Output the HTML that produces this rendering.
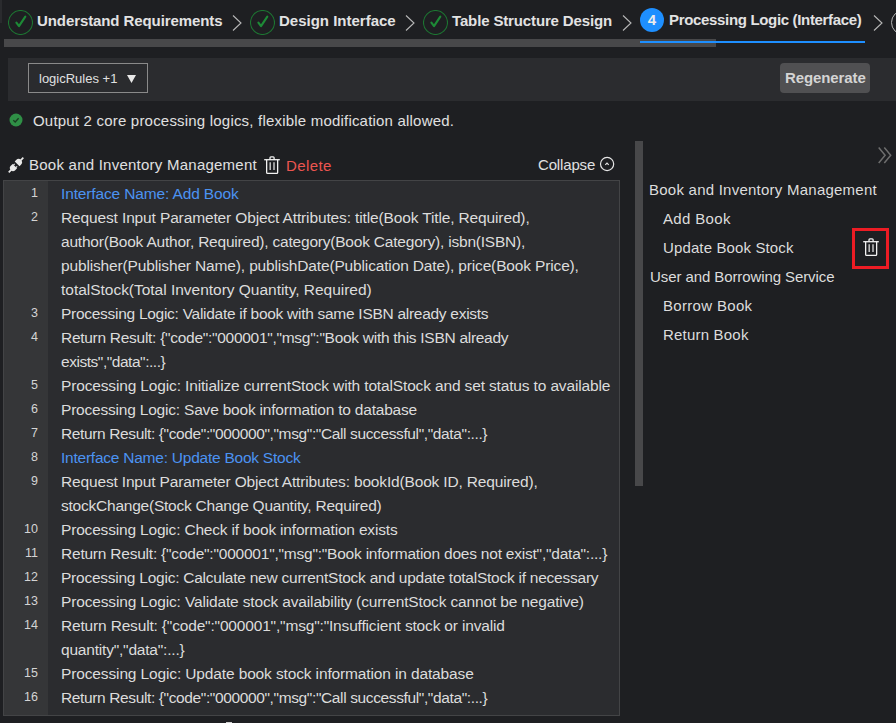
<!DOCTYPE html>
<html><head><meta charset="utf-8">
<style>
*{margin:0;padding:0;box-sizing:border-box}
html,body{width:896px;height:723px;overflow:hidden;background:#1e1f22;font-family:"Liberation Sans",sans-serif;color:#dcdcdc}
.abs{position:absolute}
.tab{position:absolute;top:12px;font-size:15px;font-weight:bold;color:#e2e2e2;white-space:nowrap;line-height:17px}
.ck{position:absolute;top:10px;width:25px;height:25px}
.chev{position:absolute;top:15px;width:10px;height:16px}
.code{position:absolute;left:3px;top:180px;width:617px;height:536px;border:1px solid #434446;background:#2b2c2f}
.gutter{position:absolute;left:0;top:0;width:44px;height:100%;background:#353638}
.ln{position:absolute;left:0;width:34px;text-align:right;font-size:12.5px;color:#d4d4d4;line-height:24px}
.row{position:absolute;left:57px;font-size:15.5px;line-height:24px;white-space:nowrap;color:#dcdcdc}
.blue{color:#4b93f2}
.tree{position:absolute;font-size:15px;white-space:nowrap;color:#dcdcdc;line-height:17px}
</style></head>
<body>
<!-- left top strip -->
<div class="abs" style="left:0;top:0;width:2px;height:23px;background:#2a2b2e"></div>

<!-- step tabs -->
<svg class="ck" style="left:8px" viewBox="0 0 25 25"><circle cx="12.5" cy="12.5" r="12" fill="none" stroke="#1d7532" stroke-width="1.1"/><path d="M8.4 12.6 L11 16.2 L17.3 6.6" fill="none" stroke="#1d8a36" stroke-width="2.1" stroke-linecap="round" stroke-linejoin="round"/></svg>
<div class="tab" style="left:37px;letter-spacing:-0.09px">Understand Requirements</div>
<svg class="chev" style="left:232px" viewBox="0 0 10 16"><path d="M1 0.5 L9 8 L1 15.5" fill="none" stroke="#b8b8b8" stroke-width="1.1"/></svg>

<svg class="ck" style="left:250px" viewBox="0 0 25 25"><circle cx="12.5" cy="12.5" r="12" fill="none" stroke="#1d7532" stroke-width="1.1"/><path d="M8.4 12.6 L11 16.2 L17.3 6.6" fill="none" stroke="#1d8a36" stroke-width="2.1" stroke-linecap="round" stroke-linejoin="round"/></svg>
<div class="tab" style="left:279px">Design Interface</div>
<svg class="chev" style="left:405px" viewBox="0 0 10 16"><path d="M1 0.5 L9 8 L1 15.5" fill="none" stroke="#b8b8b8" stroke-width="1.1"/></svg>

<svg class="ck" style="left:423px" viewBox="0 0 25 25"><circle cx="12.5" cy="12.5" r="12" fill="none" stroke="#1d7532" stroke-width="1.1"/><path d="M8.4 12.6 L11 16.2 L17.3 6.6" fill="none" stroke="#1d8a36" stroke-width="2.1" stroke-linecap="round" stroke-linejoin="round"/></svg>
<div class="tab" style="left:452px;letter-spacing:-0.14px">Table Structure Design</div>
<svg class="chev" style="left:622px" viewBox="0 0 10 16"><path d="M1 0.5 L9 8 L1 15.5" fill="none" stroke="#b8b8b8" stroke-width="1.1"/></svg>

<div class="abs" style="left:640px;top:8px;width:24px;height:24px;border-radius:50%;background:#1e8fff;color:#ececec;font-weight:bold;font-size:15px;text-align:center;line-height:24px">4</div>
<div class="tab" style="left:669px;top:11px;letter-spacing:-0.33px">Processing Logic (Interface)</div>
<svg class="chev" style="left:873px" viewBox="0 0 10 16"><path d="M1 0.5 L9 8 L1 15.5" fill="none" stroke="#b8b8b8" stroke-width="1.1"/></svg>
<div class="abs" style="left:890.5px;top:10px;width:25px;height:25px;border-radius:50%;border:1.2px solid #b4b4b4"></div>

<!-- horizontal scroll bar + underline -->
<div class="abs" style="left:4px;top:39px;width:712px;height:8px;background:#48484a"></div>
<div class="abs" style="left:640px;top:41px;width:225px;height:2px;background:#1e8fff"></div>

<!-- toolbar -->
<div class="abs" style="left:8px;top:58px;width:888px;height:43px;background:#2b2c2f"></div>
<div class="abs" style="left:28px;top:63px;width:120px;height:30px;border:1px solid #8a8a8a;background:#2a2b2e"></div>
<div class="abs" style="left:39px;top:71px;font-size:13px;line-height:15px;color:#e0e0e0;white-space:nowrap">logicRules +1</div>
<svg class="abs" style="left:127px;top:75px" width="9" height="8" viewBox="0 0 9 8"><path d="M0 0 H9 L4.5 8 Z" fill="#e8e8e8"/></svg>
<div class="abs" style="left:780px;top:63px;width:90px;height:30px;border-radius:4px;background:#505052"></div>
<div class="abs" style="left:785px;top:69px;font-size:15px;font-weight:bold;line-height:17px;color:#d4d4d4;letter-spacing:-0.1px">Regenerate</div>

<!-- status -->
<svg class="abs" style="left:9px;top:113px" width="14" height="14" viewBox="0 0 14 14"><circle cx="7" cy="7" r="6.5" fill="#2f8f46"/><path d="M4.3 7.2 L6.2 9 L9.6 5.2" fill="none" stroke="#1b3a22" stroke-width="1.3"/></svg>
<div class="abs" style="left:33px;top:112px;font-size:15px;line-height:17px;color:#e0e0e0;white-space:nowrap;letter-spacing:0.2px">Output 2 core processing logics, flexible modification allowed.</div>

<!-- section header -->
<svg class="abs" style="left:4px;top:153px" width="24" height="24" viewBox="0 0 24 24"><g transform="translate(12,12) rotate(-45)" fill="#e8e8e8" stroke="none"><rect x="-10.3" y="-0.85" width="4.5" height="1.7"/><path d="M-1.6 -3.1 H-4.2 A3.1 3.1 0 0 0 -4.2 3.1 H-1.6 Z"/><rect x="-2" y="-2.3" width="1.9" height="1.15"/><rect x="-2" y="1.15" width="1.9" height="1.15"/><path d="M1.6 -3.4 H3.6 A3.4 3.4 0 0 1 3.6 3.4 H1.6 Z"/><rect x="5.5" y="-0.85" width="4.9" height="1.7"/></g></svg>
<div class="abs" style="left:29px;top:156px;font-size:15px;line-height:17px;color:#e0e0e0;white-space:nowrap;letter-spacing:0.24px">Book and Inventory Management</div>
<svg class="abs" style="left:260px;top:153px" width="24" height="24" viewBox="0 0 24 24"><g fill="none" stroke="#f2f2f2" stroke-width="1.3"><path d="M10 6.6 V4.8 Q10 3.85 10.95 3.85 H13.15 Q14.1 3.85 14.1 4.8 V6.6"/><path d="M4.2 6.7 H19.8"/><path d="M6.65 6.7 V19.4 Q6.65 20.35 7.6 20.35 H16.7 Q17.65 20.35 17.65 19.4 V6.7"/><path d="M10.2 9.2 V16.9 M14 9.2 V16.9" stroke="#c4c4c4" stroke-width="1.5"/></g></svg>
<div class="abs" style="left:286px;top:157px;font-size:15px;line-height:17px;color:#ec5550;white-space:nowrap;letter-spacing:0.4px">Delete</div>
<div class="abs" style="left:538px;top:156px;font-size:15px;line-height:17px;color:#e0e0e0;white-space:nowrap;letter-spacing:-0.15px">Collapse</div>
<svg class="abs" style="left:595px;top:152px" width="24" height="24" viewBox="0 0 24 24"><circle cx="12.1" cy="12" r="6.6" fill="none" stroke="#e6e6e6" stroke-width="1.2"/><path d="M10.3 12.9 L12 11.2 L13.7 12.9" fill="none" stroke="#e6e6e6" stroke-width="1.2"/></svg>

<!-- code panel -->
<div class="code">
  <div class="gutter"></div>
  <div class="ln" style="top:0px">1</div>
<div class="ln" style="top:24px">2</div>
<div class="ln" style="top:120px">3</div>
<div class="ln" style="top:144px">4</div>
<div class="ln" style="top:192px">5</div>
<div class="ln" style="top:216px">6</div>
<div class="ln" style="top:240px">7</div>
<div class="ln" style="top:264px">8</div>
<div class="ln" style="top:288px">9</div>
<div class="ln" style="top:336px">10</div>
<div class="ln" style="top:360px">11</div>
<div class="ln" style="top:384px">12</div>
<div class="ln" style="top:408px">13</div>
<div class="ln" style="top:432px">14</div>
<div class="ln" style="top:480px">15</div>
<div class="ln" style="top:504px">16</div>
<div class="row blue" style="top:1px;letter-spacing:-0.139px">Interface Name: Add Book</div>
<div class="row " style="top:25px;letter-spacing:-0.135px">Request Input Parameter Object Attributes: title(Book Title, Required),</div>
<div class="row " style="top:49px;letter-spacing:-0.209px">author(Book Author, Required), category(Book Category), isbn(ISBN),</div>
<div class="row " style="top:73px;letter-spacing:-0.147px">publisher(Publisher Name), publishDate(Publication Date), price(Book Price),</div>
<div class="row " style="top:97px;letter-spacing:-0.02px">totalStock(Total Inventory Quantity, Required)</div>
<div class="row " style="top:121px;letter-spacing:-0.278px">Processing Logic: Validate if book with same ISBN already exists</div>
<div class="row " style="top:145px;letter-spacing:-0.282px">Return Result: {"code":"000001","msg":"Book with this ISBN already</div>
<div class="row " style="top:169px;letter-spacing:-0.462px">exists","data":...}</div>
<div class="row " style="top:193px;letter-spacing:-0.147px">Processing Logic: Initialize currentStock with totalStock and set status to available</div>
<div class="row " style="top:217px;letter-spacing:-0.2px">Processing Logic: Save book information to database</div>
<div class="row " style="top:241px;letter-spacing:-0.376px">Return Result: {"code":"000000","msg":"Call successful","data":...}</div>
<div class="row blue" style="top:265px;letter-spacing:-0.237px">Interface Name: Update Book Stock</div>
<div class="row " style="top:289px;letter-spacing:-0.16px">Request Input Parameter Object Attributes: bookId(Book ID, Required),</div>
<div class="row " style="top:313px;letter-spacing:-0.228px">stockChange(Stock Change Quantity, Required)</div>
<div class="row " style="top:337px;letter-spacing:-0.18px">Processing Logic: Check if book information exists</div>
<div class="row " style="top:361px;letter-spacing:-0.218px">Return Result: {"code":"000001","msg":"Book information does not exist","data":...}</div>
<div class="row " style="top:385px;letter-spacing:-0.244px">Processing Logic: Calculate new currentStock and update totalStock if necessary</div>
<div class="row " style="top:409px;letter-spacing:-0.152px">Processing Logic: Validate stock availability (currentStock cannot be negative)</div>
<div class="row " style="top:433px;letter-spacing:-0.17px">Return Result: {"code":"000001","msg":"Insufficient stock or invalid</div>
<div class="row " style="top:457px;letter-spacing:-0.2px">quantity","data":...}</div>
<div class="row " style="top:481px;letter-spacing:-0.132px">Processing Logic: Update book stock information in database</div>
<div class="row " style="top:505px;letter-spacing:-0.374px">Return Result: {"code":"000000","msg":"Call successful","data":...}</div>
</div>
<div class="abs" style="left:226px;top:722px;width:6px;height:1px;background:#d0d0d0"></div>

<!-- vertical scrollbar -->
<div class="abs" style="left:635px;top:141px;width:8px;height:345px;background:#48484a"></div>

<!-- right tree -->
<svg class="abs" style="left:870px;top:140px" width="26" height="30" viewBox="0 0 26 30"><path d="M8.7 7.5 L15.1 15.3 L8.7 23 M14.3 7.5 L20.7 15.3 L14.3 23" fill="none" stroke="#6e6e6e" stroke-width="1.5"/></svg>
<div class="tree" style="left:649px;top:181px;letter-spacing:0.24px">Book and Inventory Management</div>
<div class="tree" style="left:663px;top:210px;letter-spacing:0.34px">Add Book</div>
<div class="tree" style="left:663px;top:239px;letter-spacing:0.125px">Update Book Stock</div>
<div class="tree" style="left:650px;top:268px;letter-spacing:-0.09px">User and Borrowing Service</div>
<div class="tree" style="left:663px;top:297px;letter-spacing:0.32px">Borrow Book</div>
<div class="tree" style="left:663px;top:326px;letter-spacing:0.2px">Return Book</div>

<div class="abs" style="left:852px;top:228px;width:37px;height:41px;border:3px solid #ed1c24"></div>
<svg class="abs" style="left:859px;top:235px" width="24" height="24" viewBox="0 0 24 24"><g fill="none" stroke="#f2f2f2" stroke-width="1.3"><path d="M10 6.6 V4.8 Q10 3.85 10.95 3.85 H13.15 Q14.1 3.85 14.1 4.8 V6.6"/><path d="M4.2 6.7 H19.8"/><path d="M6.65 6.7 V19.4 Q6.65 20.35 7.6 20.35 H16.7 Q17.65 20.35 17.65 19.4 V6.7"/><path d="M10.2 9.2 V16.9 M14 9.2 V16.9" stroke="#c4c4c4" stroke-width="1.5"/></g></svg>
</body></html>
